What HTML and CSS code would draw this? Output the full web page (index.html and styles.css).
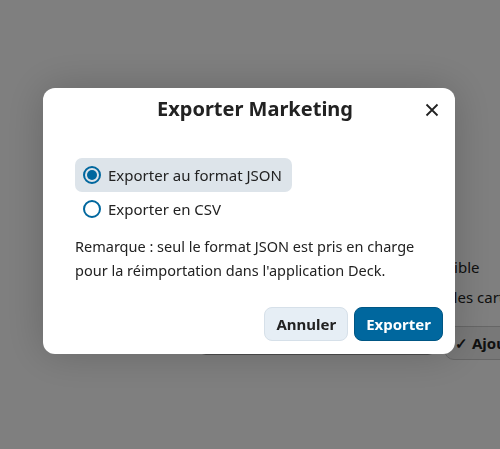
FILE: index.html
```html
<!DOCTYPE html>
<html lang="fr">
<head>
    <meta charset="UTF-8">
    <meta name="viewport" content="width=device-width, initial-scale=1.0">
    <title>Exporter Marketing</title>
    <link rel="stylesheet" href="styles.css">
</head>
<body>
    <!-- page behind the dialog -->
    <main class="page">
        <p class="page-line first">Visible</p>
        <p class="page-line second">Toutes les cartes</p>
        <div class="page-actions">
            <div class="page-field"></div>
            <button class="page-btn">✓ Ajouter</button>
        </div>
    </main>

    <div class="overlay">
        <section class="modal" role="dialog" aria-labelledby="modal-title">
            <header class="modal-header">
                <h2 id="modal-title">Exporter Marketing</h2>
                <button class="close" aria-label="Fermer">
                    <svg width="14" height="14" viewBox="0 0 14 14">
                        <path d="M1.5 1.5 L12.5 12.5 M12.5 1.5 L1.5 12.5" stroke="#222" stroke-width="1.8" fill="none"/>
                    </svg>
                </button>
            </header>

            <div class="modal-body">
                <div class="options">
                    <label class="option checked">
                        <input type="radio" name="format" value="json" checked>
                        <span class="radio"></span>
                        Exporter au format JSON
                    </label>
                    <label class="option">
                        <input type="radio" name="format" value="csv">
                        <span class="radio"></span>
                        Exporter en CSV
                    </label>
                </div>
                <p class="note">Remarque : seul le format JSON est pris en charge pour la réimportation dans l'application Deck.</p>
            </div>

            <footer class="modal-footer">
                <button class="btn secondary">Annuler</button>
                <button class="btn primary">Exporter</button>
            </footer>
        </section>
    </div>
</body>
</html>
```

FILE: styles.css
```css
* {
    margin: 0;
    padding: 0;
    box-sizing: border-box;
    font-family: "Noto Sans", "Open Sans", sans-serif;
}
body {
    height: 100vh;
    background: #fff;
    color: #222;
    overflow: hidden;
}
.page {
    padding-top: 255px;
    font-size: 15px;
}
.page-line {
    line-height: 24px;
    white-space: nowrap;
}
.page-line.first {
    margin-left: 434px;
}
.page-line.second {
    margin-left: 403px;
    margin-top: 6px;
}
.page-actions {
    display: flex;
    gap: 6px;
    margin-top: 20px;
    padding-left: 196px;
}
.page-field {
    flex-shrink: 0;
    width: 242px;
    height: 26px;
    border: 2px solid #999;
    border-radius: 10px;
}
.page-btn {
    flex-shrink: 0;
    height: 34px;
    padding: 0 14px 0 10px;
    border: 1px solid #ccc;
    border-radius: 10px;
    background: #f0f0f0;
    color: #222;
    font-size: 15px;
    font-weight: 700;
    white-space: nowrap;
    margin-top: -3px;
}

.overlay {
    position: fixed;
    inset: 0;
    background: rgba(0, 0, 0, 0.5);
    display: flex;
    justify-content: center;
    align-items: flex-start;
    padding-top: 88px;
    padding-right: 2px;
}
.modal {
    width: 412px;
    background: #fff;
    border-radius: 12px;
    box-shadow: 0 0 40px rgba(0, 0, 0, 0.2);
}
.modal-header {
    position: relative;
    display: flex;
    justify-content: center;
    padding: 6px 44px 0;
    height: 64px;
}
.modal-header h2 {
    font-size: 20px;
    font-weight: 700;
    line-height: 30px;
    margin-left: 12px;
}
.close {
    position: absolute;
    top: 0;
    right: 0;
    width: 44px;
    height: 44px;
    margin: -1px 0 0;
    border: none;
    background: none;
    display: flex;
    align-items: center;
    justify-content: center;
    padding-right: 2px;
    padding-top: 2px;
    cursor: pointer;
}
.modal-body {
    padding: 6px 16px 0 32px;
}
.options {
    display: flex;
    flex-direction: column;
    align-items: flex-start;
}
.option {
    display: flex;
    align-items: center;
    gap: 7px;
    height: 34px;
    padding: 0 10px 0 8px;
    border-radius: 7px;
    font-size: 15px;
    cursor: pointer;
}
.option.checked {
    background: #dde4ea;
}
.option input {
    display: none;
}
.radio {
    width: 18px;
    height: 18px;
    border: 2px solid #00679e;
    border-radius: 50%;
    display: flex;
    align-items: center;
    justify-content: center;
}
.option.checked .radio::after {
    content: "";
    width: 10px;
    height: 10px;
    border-radius: 50%;
    background: #00679e;
}
.note {
    margin-top: 8px;
    font-size: 14.5px;
    line-height: 24px;
}
.modal-footer {
    display: flex;
    justify-content: flex-end;
    gap: 6px;
    padding: 25px 12px 13px;
}
.btn {
    height: 34px;
    padding: 0 11px;
    border-radius: 8px;
    font-size: 15px;
    font-weight: 700;
    cursor: pointer;
}
.secondary {
    background: #e6eef5;
    border: 1px solid #d6e0e9;
    color: #222;
}
.primary {
    background: #00679e;
    border: 1px solid #005684;
    color: #fff;
}
```
